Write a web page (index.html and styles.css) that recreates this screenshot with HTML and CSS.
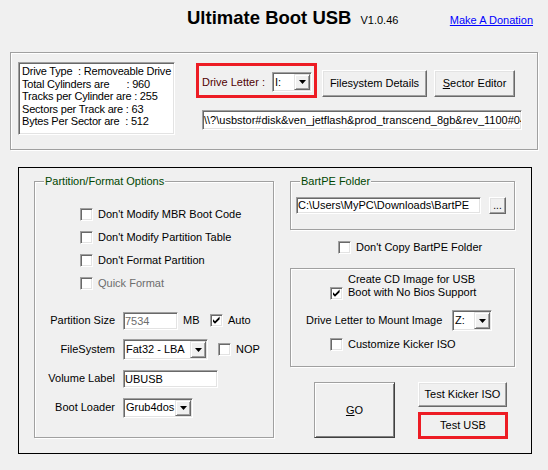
FILE: index.html
```html
<!DOCTYPE html>
<html>
<head>
<meta charset="utf-8">
<title>Ultimate Boot USB</title>
<link rel="stylesheet" href="styles.css">
</head>
<body>
<header class="header">
  <h1 class="title">Ultimate Boot USB</h1>
  <span class="version">V1.0.46</span>
  <a class="donate" href="#">Make A Donation</a>
</header>

<section class="drive-panel etched">
  <div class="info sunken">Drive Type  : Removeable Drive
Total Cylinders are      : 960
Tracks per Cylinder are : 255
Sectors per Track are : 63
Bytes Per Sector are  : 512</div>
  <div class="drive-controls">
    <div class="drive-row">
      <div class="drive-letter">
        <span class="dl-label">Drive Letter :</span>
        <div class="combo sunken combo-drive">
          <span class="combo-value">I:</span>
          <span class="combo-btn"><svg width="7" height="4" viewBox="0 0 7 4"><polygon points="0,0 7,0 3.5,4" fill="#000"/></svg></span>
        </div>
      </div>
      <button class="btn btn-fs">Filesystem Details</button>
      <button class="btn btn-sector"><u>S</u>ector Editor</button>
    </div>
    <div class="field sunken path-field">\\?\usbstor#disk&amp;ven_jetflash&amp;prod_transcend_8gb&amp;rev_1100#048b0b3a6e5b6d33&amp;0#{53f56307-b6bf-11d0-94f2-00a0c91efb8b}</div>
  </div>
</section>

<section class="main-panel">
  <div class="group etched partition">
    <span class="legend">Partition/Format Options</span>
    <div class="checks">
      <div class="check"><span class="box sunken"></span><span>Don't Modify MBR Boot Code</span></div>
      <div class="check"><span class="box sunken"></span><span>Don't Modify Partition Table</span></div>
      <div class="check"><span class="box sunken"></span><span>Don't Format Partition</span></div>
      <div class="check disabled"><span class="box sunken"></span><span>Quick Format</span></div>
    </div>
    <div class="form">
      <div class="frow">
        <span class="flabel">Partition Size</span>
        <div class="field sunken size-field disabled">7534</div>
        <span class="mb">MB</span>
        <span class="box sunken"><svg width="9" height="9" viewBox="0 0 9 9"><polygon points="1,3.2 3,5.2 7.6,0.6 7.6,3.2 3,7.8 1,5.8" fill="#000"/></svg></span>
        <span>Auto</span>
      </div>
      <div class="frow">
        <span class="flabel">FileSystem</span>
        <div class="combo sunken combo-fs">
          <span class="combo-value">Fat32 - LBA</span>
          <span class="combo-btn"><svg width="7" height="4" viewBox="0 0 7 4"><polygon points="0,0 7,0 3.5,4" fill="#000"/></svg></span>
        </div>
        <span class="box sunken nop-box"></span>
        <span>NOP</span>
      </div>
      <div class="frow">
        <span class="flabel">Volume Label</span>
        <div class="field sunken vol-field">UBUSB</div>
      </div>
      <div class="frow">
        <span class="flabel">Boot Loader</span>
        <div class="combo sunken combo-boot">
          <span class="combo-value">Grub4dos</span>
          <span class="combo-btn"><svg width="7" height="4" viewBox="0 0 7 4"><polygon points="0,0 7,0 3.5,4" fill="#000"/></svg></span>
        </div>
      </div>
    </div>
  </div>

  <div class="right-col">
    <div class="group etched bart">
      <span class="legend">BartPE Folder</span>
      <div class="field sunken bart-field">C:\Users\MyPC\Downloads\BartPE</div>
      <button class="btn browse">...</button>
    </div>
    <div class="check nocopy"><span class="box sunken"></span><span>Don't Copy BartPE Folder</span></div>
    <div class="group etched cd">
      <div class="cd-check">
        <span class="box sunken"><svg width="9" height="9" viewBox="0 0 9 9"><polygon points="1,3.2 3,5.2 7.6,0.6 7.6,3.2 3,7.8 1,5.8" fill="#000"/></svg></span>
        <span class="cd-text">Create CD Image for USB<br>Boot with No Bios Support</span>
      </div>
      <div class="mount">
        <span>Drive Letter to Mount Image</span>
        <div class="combo sunken combo-mount">
          <span class="combo-value">Z:</span>
          <span class="combo-btn"><svg width="7" height="4" viewBox="0 0 7 4"><polygon points="0,0 7,0 3.5,4" fill="#000"/></svg></span>
        </div>
      </div>
      <div class="check kicker"><span class="box sunken"></span><span>Customize Kicker ISO</span></div>
    </div>
    <div class="actions">
      <button class="btn go"><u>G</u>O</button>
      <div class="stack">
        <button class="btn kick">Test Kicker ISO</button>
        <button class="btn usb">Test USB</button>
      </div>
    </div>
  </div>
</section>
</body>
</html>
```

FILE: styles.css
```css
* { box-sizing: border-box; }

body {
  margin: 0;
  width: 548px;
  height: 470px;
  overflow: hidden;
  background: #f0f0f0;
  color: #000;
  font-family: "Liberation Sans", Arial, sans-serif;
  font-size: 11px;
  line-height: 13px;
}

/* ---------- shared control styles ---------- */
.etched {
  border: 1px solid #a0a0a0;
  box-shadow: inset 1px 1px #fff, 1px 1px #fff;
}

.sunken {
  background: #fff;
  border: 1px solid;
  border-color: #a0a0a0 #fff #fff #a0a0a0;
  box-shadow: inset 1px 1px #696969, inset -1px -1px #e3e3e3;
}

.btn {
  font: inherit;
  color: #000;
  background: #f0f0f0;
  padding: 0;
  border: 1px solid;
  border-color: #fff #696969 #696969 #fff;
  box-shadow: inset -1px -1px #a0a0a0, inset 1px 1px #e3e3e3;
}

.disabled { color: #6d6d6d; }

.field {
  white-space: nowrap;
  overflow: hidden;
  padding: 0 0 0 1px;
}

.combo {
  display: flex;
  align-items: stretch;
  padding: 1px;
}
.combo-value {
  flex: 1;
  padding-left: 1px;
  display: flex;
  align-items: center;
  white-space: nowrap;
  overflow: hidden;
}
.combo-btn {
  width: 16px;
  flex: none;
  display: flex;
  align-items: center;
  justify-content: center;
  background: #f0f0f0;
  border: 1px solid;
  border-color: #e3e3e3 #696969 #696969 #e3e3e3;
  box-shadow: inset 1px 1px #fff, inset -1px -1px #a0a0a0;
}

.box {
  width: 13px;
  height: 13px;
  flex: none;
  display: flex;
  align-items: center;
  justify-content: center;
  margin-right: 5px;
}

.check {
  display: flex;
  align-items: center;
  height: 23px;
}

.group { position: relative; }
.legend {
  position: absolute;
  top: -8px;
  left: 9px;
  padding: 0 1px;
  line-height: 14px;
  background: #f0f0f0;
  color: #004600;
  white-space: nowrap;
}

/* ---------- header ---------- */
.header {
  display: flex;
  align-items: baseline;
  height: 52px;
  padding: 7px 15px 0 187px;
}
.title {
  margin: 0;
  font-size: 18.5px;
  line-height: 22px;
  font-weight: bold;
}
.version { margin-left: 9px; }
.donate {
  margin-left: auto;
  color: #0000ff;
  text-decoration: underline;
}

/* ---------- drive panel ---------- */
.drive-panel {
  display: flex;
  align-items: flex-start;
  margin-left: 10px;
  width: 528px;
  height: 98px;
  padding: 9px 0 0 7px;
}
.info {
  width: 157px;
  height: 73px;
  padding: 2px 0 0 3px;
  line-height: 12.5px;
  letter-spacing: -0.2px;
  white-space: pre;
  overflow: hidden;
}
.drive-controls {
  margin: 1px 0 0 21px;
}
.drive-row {
  display: flex;
  align-items: flex-start;
}
.drive-letter {
  width: 121px;
  height: 35px;
  border: 3px solid #ed1c24;
  display: flex;
  align-items: center;
  justify-content: space-between;
  padding: 3px 2px 0 3px;
}
.dl-label { color: #500000; }
.combo-drive { width: 40px; height: 20px; }

.btn-fs {
  margin: 7px 0 0 5px;
  width: 105px;
  height: 27px;
}
.btn-sector {
  margin: 7px 0 0 7px;
  width: 81px;
  height: 27px;
}
.path-field {
  margin: 12px 0 0 6px;
  width: 320px;
  height: 20px;
  line-height: 18px;
}

/* ---------- main panel ---------- */
.main-panel {
  display: flex;
  align-items: flex-start;
  margin: 17px 0 0 18px;
  width: 514px;
  height: 287px;
  border: 1px solid #000;
  padding: 13px 0 0 15px;
}

.partition {
  width: 240px;
  height: 257px;
}
.checks {
  margin: 21px 0 0 45px;
}

.form { margin-top: 11px; }
.frow {
  display: flex;
  align-items: center;
  height: 29px;
}
.flabel {
  width: 80px;
  margin-right: 8px;
  text-align: right;
  white-space: nowrap;
}
.size-field {
  width: 55px;
  height: 18px;
  line-height: 16px;
}
.mb {
  width: 32px;
  padding-left: 5px;
}
.combo-fs { width: 85px; height: 21px; }
.nop-box { margin-left: 10px; }
.vol-field {
  width: 95px;
  height: 18px;
  line-height: 16px;
}
.combo-boot { width: 70px; height: 20px; }

/* ---------- right column ---------- */
.right-col {
  margin-left: 16px;
  width: 225px;
}
.bart {
  height: 49px;
  display: flex;
  align-items: flex-start;
  padding: 15px 0 0 5px;
}
.bart-field {
  width: 185px;
  height: 17px;
  line-height: 15px;
}
.browse {
  margin-left: 8px;
  width: 17px;
  height: 17px;
  line-height: 13px;
  font-size: 10px;
}
.nocopy {
  margin: 7px 0 0 48px;
  height: 20px;
}

.cd {
  margin-top: 11px;
  height: 99px;
  padding-top: 4px;
}
.cd-check {
  display: flex;
  align-items: flex-start;
  margin-left: 39px;
}
.cd-check .box { margin-top: 14px; }
.cd-text { line-height: 13px; }
.mount {
  display: flex;
  align-items: center;
  height: 21px;
  margin-top: 10px;
  padding: 0 22px 0 15px;
}
.combo-mount {
  margin-left: auto;
  width: 40px;
  height: 21px;
}
.kicker {
  margin: 7px 0 0 39px;
  height: 13px;
}

.actions {
  display: flex;
  align-items: flex-start;
  margin-top: 15px;
}
.go {
  margin-left: 24px;
  width: 81px;
  height: 56px;
  border-color: #a0a0a0 #404040 #404040 #a0a0a0;
  box-shadow: inset 1px 1px #fff, inset -1px -1px #808080;
}
.stack {
  margin-left: 23px;
  display: flex;
  flex-direction: column;
}
.kick {
  width: 89px;
  height: 25px;
}
.usb {
  margin-top: 5px;
  width: 90px;
  height: 27px;
  border: 3px solid #ed1c24;
  box-shadow: none;
}
```
